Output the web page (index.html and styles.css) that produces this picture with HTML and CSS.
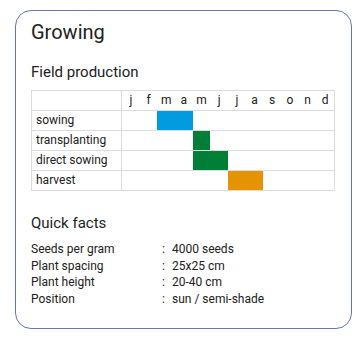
FILE: index.html
```html
<!DOCTYPE html>
<html lang="en">
<head>
<meta charset="utf-8">
<title>Growing</title>
<link rel="stylesheet" href="styles.css">
</head>
<body>
<section class="card">
  <h1 class="title">Growing</h1>
  <h2 class="subtitle">Field production</h2>
  <div class="calendar">
    <div class="row head">
      <div class="label"></div>
      <div class="m">j</div><div class="m">f</div><div class="m">m</div><div class="m">a</div>
      <div class="m">m</div><div class="m">j</div><div class="m">j</div><div class="m">a</div>
      <div class="m">s</div><div class="m">o</div><div class="m">n</div><div class="m">d</div>
    </div>
    <div class="row">
      <div class="label">sowing</div>
      <div class="bar sow" style="grid-column: 4 / 6"></div>
    </div>
    <div class="row">
      <div class="label">transplanting</div>
      <div class="bar plant" style="grid-column: 6 / 7"></div>
    </div>
    <div class="row">
      <div class="label">direct sowing</div>
      <div class="bar plant" style="grid-column: 6 / 8"></div>
    </div>
    <div class="row">
      <div class="label">harvest</div>
      <div class="bar harvest" style="grid-column: 8 / 10"></div>
    </div>
  </div>
  <h2 class="subtitle facts-title">Quick facts</h2>
  <div class="facts">
    <div class="fact"><span class="k">Seeds per gram</span><span class="c">:</span><span class="v">4000 seeds</span></div>
    <div class="fact"><span class="k">Plant spacing</span><span class="c">:</span><span class="v">25x25 cm</span></div>
    <div class="fact"><span class="k">Plant height</span><span class="c">:</span><span class="v">20-40 cm</span></div>
    <div class="fact"><span class="k">Position</span><span class="c">:</span><span class="v">sun / semi-shade</span></div>
  </div>
</section>
</body>
</html>
```

FILE: styles.css
```css
html, body {
  margin: 0;
  padding: 0;
  background: #ffffff;
}

body {
  font-family: Roboto, "Liberation Sans", Arial, sans-serif;
  color: #212121;
}

.card {
  box-sizing: border-box;
  width: 337px;
  margin: 10px 0 0 15px;
  padding: 9px 16px 20px 15px;
  border: 1px solid #6077b9;
  border-radius: 16px;
}

.title {
  margin: 0;
  font-size: 20px;
  line-height: 24px;
  font-weight: 400;
}

.subtitle {
  margin: 19px 0 0;
  font-size: 15px;
  line-height: 18px;
  font-weight: 400;
}

.calendar {
  margin-top: 9px;
  border: 1px solid #dcdcdc;
  font-size: 12px;
}

.row {
  display: grid;
  grid-template-columns: 90px repeat(12, 1fr);
  height: 20px;
  box-sizing: border-box;
  border-bottom: 1px solid #dcdcdc;
}

.row:last-child {
  border-bottom: 0;
  height: 19px;
}

.label {
  grid-column: 1;
  grid-row: 1;
  box-sizing: border-box;
  border-right: 1px solid #dcdcdc;
  padding: 0 0 1px 4px;
  line-height: 18px;
  white-space: nowrap;
}

.m {
  text-align: center;
  line-height: 18px;
  padding-bottom: 1px;
}

.bar {
  grid-row: 1;
}

.sow { background: #039be0; }
.plant { background: #017f37; }
.harvest { background: #e59300; }

.facts-title {
  margin-top: 23px;
}

.facts {
  margin-top: 9px;
  font-size: 12px;
  line-height: 16.7px;
}

.fact {
  display: grid;
  grid-template-columns: 131px 10px 1fr;
}
```
